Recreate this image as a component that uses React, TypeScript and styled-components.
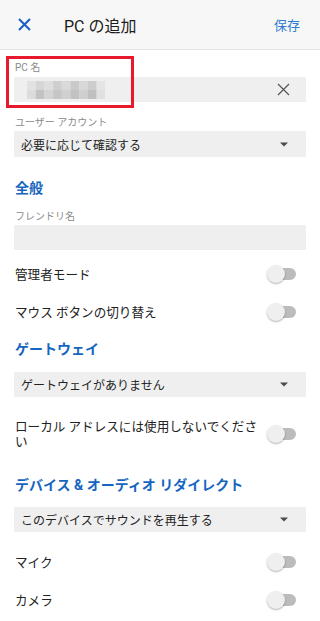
import styled, { createGlobalStyle } from 'styled-components';

const GlobalStyle = createGlobalStyle`
  body {
    margin: 0;
    background: #ffffff;
    font-family: Roboto, "Noto Sans CJK JP", "Noto Sans", sans-serif;
    color: #212121;
  }
`;

type Gap = { $top?: number };

const mosaic = [
  ['#e2e2e2', '#d6d6d6', '#dedede', '#cfcfcf', '#dadada', '#c9c9c9', '#d8d8d8', '#cdcdcd', '#e4e4e4'],
  ['#dcdcdc', '#c3c3c3', '#d4d4d4', '#c6c6c6', '#d0d0d0', '#c2c2c2', '#cfcfcf', '#c0c0c0', '#e0e0e0'],
];

function Blur() {
  return (
    <svg width="78" height="18" viewBox="0 0 78 18">
      {mosaic.map((row, r) =>
        row.map((c, i) => <rect key={`${r}-${i}`} x={i * 8.7} y={r * 9} width="8.8" height="9.1" fill={c} />)
      )}
    </svg>
  );
}

function CloseIcon({ color, size, width }: { color: string; size: number; width: number }) {
  return (
    <svg width={size} height={size} viewBox="0 0 13 13">
      <path d="M1 1 L12 12 M12 1 L1 12" stroke={color} strokeWidth={width} fill="none" />
    </svg>
  );
}

function Arrow() {
  return (
    <svg width="8" height="5" viewBox="0 0 8 5">
      <path d="M0 0.5 H8 L4 4.5 Z" fill="#4a4a4a" />
    </svg>
  );
}

function Toggle() {
  return (
    <Switch>
      <Track />
      <Thumb />
    </Switch>
  );
}

export default function App() {
  return (
    <Page>
      <GlobalStyle />
      <Header>
        <CloseIcon color="#1a5fc4" size={13} width={2} />
        <Title>PC の追加</Title>
        <Save>保存</Save>
      </Header>
      <Content>
        <Marked $top={10}>
          <Label>PC 名</Label>
          <Field $top={1}>
            <Blur />
            <Trail>
              <CloseIcon color="#555" size={13} width={1.2} />
            </Trail>
          </Field>
          <RedBox />
        </Marked>

        <Label $top={13}>ユーザー アカウント</Label>
        <Select $h={26}>
          必要に応じて確認する
          <Arrow />
        </Select>

        <Heading $top={21}>全般</Heading>
        <Label $top={11}>フレンドリ名</Label>
        <Field />

        <Row $top={5}>
          <RowText>管理者モード</RowText>
          <Toggle />
        </Row>
        <Row>
          <RowText>マウス ボタンの切り替え</RowText>
          <Toggle />
        </Row>

        <Heading $top={8}>ゲートウェイ</Heading>
        <Select $top={13}>
          ゲートウェイがありません
          <Arrow />
        </Select>
        <Row $top={18}>
          <RowText>ローカル アドレスには使用しないでください</RowText>
          <Toggle />
        </Row>

        <Heading $top={22}>デバイス &amp; オーディオ リダイレクト</Heading>
        <Select $top={12}>
          このデバイスでサウンドを再生する
          <Arrow />
        </Select>
        <Row $top={11}>
          <RowText>マイク</RowText>
          <Toggle />
        </Row>
        <Row>
          <RowText>カメラ</RowText>
          <Toggle />
        </Row>
      </Content>
    </Page>
  );
}

const Page = styled.div`
  width: 100%;
  min-height: 100vh;
  background: #ffffff;
`;

const Header = styled.header`
  height: 49px;
  display: flex;
  align-items: center;
  padding: 0 20px 0 18px;
  background: #f7f7f7;
  border-bottom: 1px solid #e4e4e4;
`;

const Title = styled.h1`
  margin: 0 0 0 33px;
  font-size: 16px;
  font-weight: 400;
  color: #1c1c1c;
`;

const Save = styled.span`
  margin-left: auto;
  font-size: 13px;
  color: #2f7bd0;
`;

const Content = styled.main`
  display: flex;
  flex-direction: column;
  padding: 0 14px;
`;

const Marked = styled.section<Gap>`
  position: relative;
  display: flex;
  flex-direction: column;
  margin-top: ${(p) => p.$top ?? 0}px;
`;

const RedBox = styled.div`
  position: absolute;
  left: -8px;
  top: -4px;
  width: 128px;
  height: 52px;
  box-sizing: border-box;
  border: 3px solid #e8192c;
  pointer-events: none;
`;

const Label = styled.div<Gap>`
  margin-top: ${(p) => p.$top ?? 0}px;
  padding-left: 1px;
  font-size: 10px;
  line-height: 16px;
  color: #8a8a8a;
`;

const Field = styled.div<Gap>`
  margin-top: ${(p) => p.$top ?? 0}px;
  height: 25px;
  display: flex;
  align-items: center;
  padding: 0 16px 0 13px;
  background: #efefef;
`;

const Trail = styled.span`
  margin-left: auto;
  display: flex;
`;

const Select = styled.div<Gap & { $h?: number }>`
  margin-top: ${(p) => p.$top ?? 0}px;
  height: ${(p) => p.$h ?? 25}px;
  display: flex;
  align-items: center;
  justify-content: space-between;
  padding: 0 18px 0 7px;
  background: #efefef;
  font-size: 12px;
  color: #222;
`;

const Heading = styled.h2<Gap>`
  margin: ${(p) => p.$top ?? 0}px 0 0;
  padding-left: 1px;
  font-size: 14px;
  font-weight: 700;
  line-height: 20px;
  color: #1565c0;
`;

const Row = styled.div<Gap>`
  margin-top: ${(p) => p.$top ?? 0}px;
  min-height: 38px;
  display: flex;
  align-items: center;
  gap: 6px;
  padding: 0 10px 0 1px;
`;

const RowText = styled.span`
  flex: 1;
  font-size: 12.6px;
  line-height: 15px;
  color: #222;
`;

const Switch = styled.span`
  position: relative;
  flex: none;
  width: 29px;
  height: 18px;
`;

const Track = styled.span`
  position: absolute;
  left: 5px;
  right: 0;
  top: 3px;
  height: 12px;
  border-radius: 6px;
  background: #bcbcbc;
`;

const Thumb = styled.span`
  position: absolute;
  left: 0;
  top: 0;
  width: 18px;
  height: 18px;
  border-radius: 50%;
  background: #efefef;
  box-shadow: 0 1px 2px rgba(0, 0, 0, 0.3);
`;
